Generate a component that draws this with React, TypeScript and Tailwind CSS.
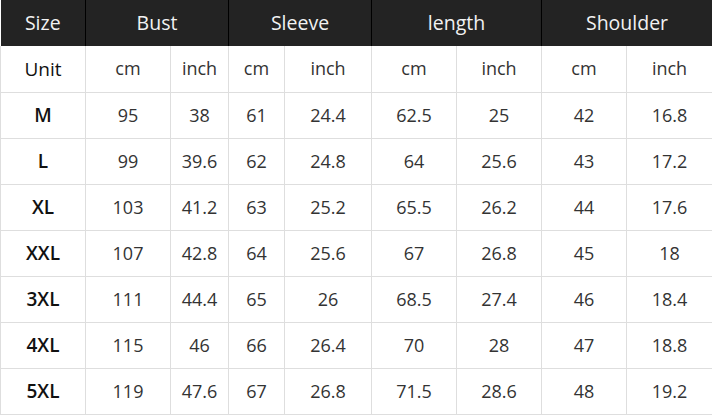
const groups = ['Bust', 'Sleeve', 'length', 'Shoulder'];

const rows: [string, ...string[]][] = [
    ['M', '95', '38', '61', '24.4', '62.5', '25', '42', '16.8'],
    ['L', '99', '39.6', '62', '24.8', '64', '25.6', '43', '17.2'],
    ['XL', '103', '41.2', '63', '25.2', '65.5', '26.2', '44', '17.6'],
    ['XXL', '107', '42.8', '64', '25.6', '67', '26.8', '45', '18'],
    ['3XL', '111', '44.4', '65', '26', '68.5', '27.4', '46', '18.4'],
    ['4XL', '115', '46', '66', '26.4', '70', '28', '47', '18.8'],
    ['5XL', '119', '47.6', '67', '26.8', '71.5', '28.6', '48', '19.2'],
];

const widths = [85, 85, 58, 56, 87, 85, 85, 85, 86];

export default function App() {
    return (
        <div
            className="w-[712px] h-[416px] bg-white overflow-hidden"
            style={{ fontFamily: '"Open Sans", "Noto Sans", sans-serif' }}>
            <table className="w-[712px] table-fixed border-collapse text-[18px] text-center">
                <colgroup>
                    {widths.map((w, i) => (
                        <col key={i} style={{ width: `${w}px` }} />
                    ))}
                </colgroup>
                <thead>
                    <tr className="h-[46px] bg-[#232323] text-[#f2f2f2] text-[19.5px]">
                        <th className="font-normal border-r border-black">Size</th>
                        {groups.map((g) => (
                            <th
                                key={g}
                                colSpan={2}
                                className="font-normal border-r border-black">
                                {g}
                            </th>
                        ))}
                    </tr>
                </thead>
                <tbody>
                    <tr className="h-[46px]">
                        <td className="border border-[#dedede] border-t-0 text-[#111] text-[19px]">
                            Unit
                        </td>
                        {groups.map((g) => (
                            <>
                                <td
                                    key={g + 'cm'}
                                    className="border border-[#dedede] border-t-0 text-[#333]">
                                    cm
                                </td>
                                <td
                                    key={g + 'in'}
                                    className="border border-[#dedede] border-t-0 text-[#333]">
                                    inch
                                </td>
                            </>
                        ))}
                    </tr>
                    {rows.map(([size, ...vals]) => (
                        <tr key={size} className="h-[46px]">
                            <td className="border border-[#dedede] font-semibold text-[#111] text-[19px]">
                                {size}
                            </td>
                            {vals.map((v, i) => (
                                <td
                                    key={i}
                                    className="border border-[#dedede] text-[#333]">
                                    {v}
                                </td>
                            ))}
                        </tr>
                    ))}
                </tbody>
            </table>
        </div>
    );
}
